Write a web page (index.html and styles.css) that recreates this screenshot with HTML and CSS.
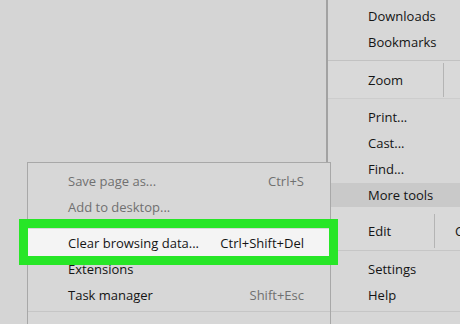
FILE: index.html
```html
<!DOCTYPE html>
<html>
<head>
<meta charset="utf-8">
<link rel="stylesheet" href="styles.css">
</head>
<body>
<div class="stage">
  <div class="menu main">
    <div class="item first">Downloads</div>
    <div class="item">Bookmarks</div>
    <div class="sep"></div>
    <div class="group zoom"><span class="label">Zoom</span><span class="divider"></span></div>
    <div class="sep2"></div>
    <div class="item">Print...</div>
    <div class="item">Cast...</div>
    <div class="item">Find...</div>
    <div class="item hover">More tools</div>
    <div class="group edit"><span class="label">Edit</span><span class="divider"></span><span class="btn">Cut</span></div>
    <div class="item">Settings</div>
    <div class="item">Help</div>
    <div class="sep3"></div>
  </div>
  <div class="menu sub">
    <div class="sitem disabled"><span>Save page as...</span><span class="key">Ctrl+S</span></div>
    <div class="sitem disabled"><span>Add to desktop...</span><span class="key"></span></div>
    <div class="ssep"></div>
    <div class="sitem active"><span>Clear browsing data...</span><span class="key">Ctrl+Shift+Del</span></div>
    <div class="sitem"><span>Extensions</span><span class="key"></span></div>
    <div class="sitem"><span>Task manager</span><span class="key grey">Shift+Esc</span></div>
    <div class="ssep bottom"></div>
  </div>
  <div class="callout"></div>
</div>
</body>
</html>
```
FILE: styles.css
```css
html, body {
  margin: 0;
  padding: 0;
}
body {
  background: #d5d5d5;
  font-family: "Open Sans", "Noto Sans", sans-serif;
  font-size: 13px;
  color: #141414;
  overflow: hidden;
}
.stage {
  position: relative;
  width: 460px;
  height: 324px;
  overflow: hidden;
}
.menu {
  position: absolute;
  background: #d7d7d7;
}
.main {
  left: 326px;
  top: 0;
  width: 200px;
  height: 324px;
  border-left: 2px solid #a2a2a2;
  padding-top: 3px;
  box-sizing: border-box;
}
.item {
  height: 26px;
  line-height: 26px;
  padding-left: 40px;
}
.item.hover {
  background: #c9c9c9;
  height: 24px;
  line-height: 24px;
  margin-top: 1px;
}
.sep {
  margin-top: 5px;
  border-top: 1px solid #c2c2c2;
}
.sep2 {
  border-top: 1px solid #cdcdcd;
  margin-bottom: 5px;
}
.group {
  display: flex;
  align-items: center;
  padding-left: 40px;
  background: #d9d9d9;
}
.zoom {
  height: 37px;
}
.zoom .label {
  width: 75px;
}
.group .divider {
  width: 1px;
  background: #b4b4b4;
  align-self: stretch;
}
.zoom .divider {
  margin: 2px 0 1px 0;
}
.edit {
  height: 44px;
  border-bottom: 1px solid #c6c6c6;
  margin-bottom: 5px;
  padding-top: 5px;
  box-sizing: border-box;
}
.edit .label {
  width: 66px;
}
.edit .divider {
  margin: 2px 0 2px 0;
}
.edit .btn {
  padding-left: 20px;
}
.sep3 {
  margin-top: 3px;
  border-top: 1px solid #c6c6c6;
}
.sub {
  left: 27px;
  top: 162px;
  width: 304px;
  height: 170px;
  border: 1px solid #a8a8a8;
  box-sizing: border-box;
  padding-top: 5px;
}
.sitem {
  display: flex;
  justify-content: space-between;
  height: 26px;
  line-height: 26px;
  padding-left: 40px;
  padding-right: 26px;
}
.sitem.disabled {
  color: #707070;
}
.sitem .key.grey {
  color: #707070;
}
.sitem.active {
  background: #f4f4f4;
  height: 27px;
  line-height: 29px;
}
.ssep {
  height: 9px;
}
.ssep.bottom {
  height: 0;
  margin-top: 3px;
  border-top: 1px solid #c6c6c6;
}
.callout {
  position: absolute;
  left: 19px;
  top: 219px;
  width: 319px;
  height: 46px;
  box-sizing: border-box;
  border: 9px solid #27e627;
}
```
